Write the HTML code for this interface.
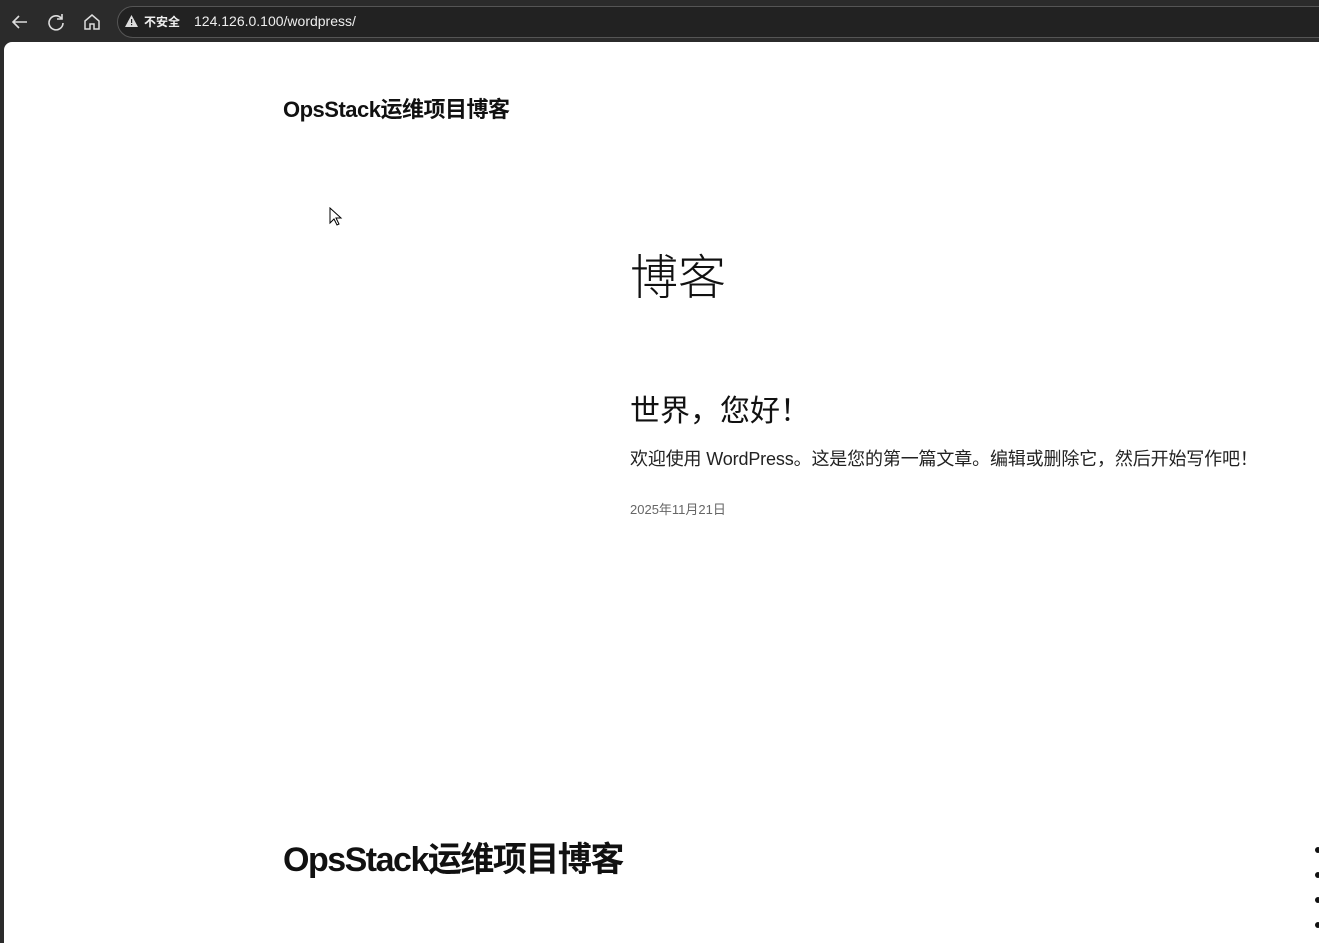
<!DOCTYPE html>
<html><head><meta charset="utf-8"><style>
*{margin:0;padding:0;box-sizing:border-box}
body{width:1319px;height:943px;background:#2b2b2b;position:relative;overflow:hidden;font-family:"Liberation Sans","Noto Sans CJK SC",sans-serif}
.bar{position:absolute;left:0;top:0;width:1319px;height:42px;background:#2b2b2b}
.url{position:absolute;left:117px;top:6px;width:1220px;height:32px;border:1px solid #555;border-radius:16px;background:#222}
.page{position:absolute;left:4px;top:42px;width:1315px;height:901px;background:#fff;border-top-left-radius:8px}
.t{position:absolute;white-space:nowrap;color:#111}
.dot{position:absolute;left:1315px;width:6px;height:6px;border-radius:3px;background:#111}
</style></head><body>
<div class="bar">
<svg style="position:absolute;left:10px;top:12px" width="20" height="20" viewBox="0 0 20 20"><path d="M17 10H3M9 4L3 10l6 6" stroke="#ddd" stroke-width="1.6" fill="none"/></svg>
<svg style="position:absolute;left:46px;top:12px" width="20" height="20" viewBox="0 0 20 20"><path d="M15.5 6.5A7 7 0 1 0 17 11" stroke="#ddd" stroke-width="1.6" fill="none"/><path d="M16 2v5h-5" stroke="#ddd" stroke-width="1.6" fill="none"/></svg>
<svg style="position:absolute;left:82px;top:12px" width="20" height="20" viewBox="0 0 20 20"><path d="M3 9l7-6 7 6v8h-5v-5H8v5H3z" stroke="#ddd" stroke-width="1.5" fill="none"/></svg>
<div class="url"></div>
<svg style="position:absolute;left:125px;top:15px" width="13" height="12" viewBox="0 0 13 12"><path d="M6.5 0L13 12H0z" fill="#ddd"/><rect x="6" y="4" width="1.2" height="4" fill="#222"/><rect x="6" y="9" width="1.2" height="1.2" fill="#222"/></svg>
<div class="t" style="left:144px;top:13px;font-size:12px;color:#eee;font-weight:bold">不安全</div>
<div class="t" style="left:194px;top:13px;font-size:14px;color:#eee">124.126.0.100/wordpress/</div>
</div>
<div class="page"></div>
<div class="t" style="left:283px;top:92px;font-size:22px;font-weight:bold;letter-spacing:-0.5px">OpsStack运维项目博客</div>
<svg style="position:absolute;left:329px;top:207px" width="14" height="20" viewBox="0 0 14 20"><path d="M1 1v15l4-4 3 6 2-1-3-6h5z" fill="#fff" stroke="#000"/></svg>
<div class="t" style="left:630px;top:238px;font-size:48px;font-weight:300">博客</div>
<div class="t" style="left:630px;top:386px;font-size:30px">世界，您好！</div>
<div class="t" style="left:630px;top:445px;font-size:18px;color:#222;letter-spacing:-0.15px">欢迎使用 WordPress。这是您的第一篇文章。编辑或删除它，然后开始写作吧！</div>
<div class="t" style="left:630px;top:499px;font-size:13px;color:#666">2025年11月21日</div>
<div class="t" style="left:283px;top:832px;font-size:34px;font-weight:bold;letter-spacing:-1.5px">OpsStack运维项目博客</div>
<div class="dot" style="top:847px"></div><div class="dot" style="top:872px"></div><div class="dot" style="top:897px"></div><div class="dot" style="top:922px"></div>
</body></html>
